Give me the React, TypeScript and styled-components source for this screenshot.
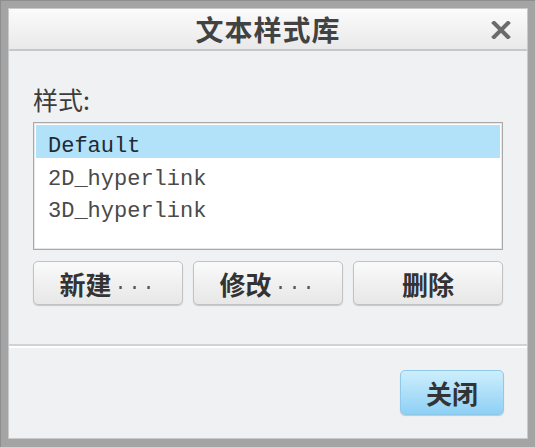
import React, { useState } from 'react';
import styled, { createGlobalStyle } from 'styled-components';

const GlobalStyle = createGlobalStyle`
  html, body {
    margin: 0;
    padding: 0;
    background: #a6a6a6;
  }
  * {
    box-sizing: border-box;
  }
`;

const CJK = `"Noto Sans CJK SC", "Noto Sans", sans-serif`;

const Frame = styled.div`
  width: 535px;
  height: 447px;
  background: #a4a4a4;
  border-top: 1px solid #8e8e8e;
  border-left: 1px solid #8e8e8e;
  padding: 7px 7px 8px 7px;
  display: flex;
  flex-direction: column;
`;

const Window = styled.div`
  flex: 1;
  display: flex;
  flex-direction: column;
  background: #f0f1f3;
  border: 1px solid #c9c9c9;
`;

const TitleBar = styled.div`
  height: 42px;
  flex-shrink: 0;
  position: relative;
  display: flex;
  align-items: center;
  justify-content: center;
  background: linear-gradient(#fbfbfb, #e9e9ea);
  border-bottom: 2px solid #c6c7c9;
`;

const Title = styled.div`
  font-family: ${CJK};
  font-size: 28px;
  font-weight: 700;
  color: #424242;
  letter-spacing: 1px;
`;

const CloseX = styled.button`
  position: absolute;
  right: 16px;
  top: 12px;
  width: 20px;
  height: 18px;
  padding: 0;
  border: none;
  background: transparent;
  cursor: pointer;
`;

const Body = styled.div`
  padding: 33px 24px 39px 24px;
  display: flex;
  flex-direction: column;
  border-bottom: 2px solid #d2d3d5;
`;

const Label = styled.div`
  font-family: ${CJK};
  font-size: 25px;
  line-height: 30px;
  color: #3c3c3c;
  margin-bottom: 8px;
`;

const ListBox = styled.div`
  height: 128px;
  background: #ffffff;
  border: 1px solid #a9a9a9;
  box-shadow: inset 0 0 0 1px #e6e6e6;
  padding: 2px 2px;
`;

const Row = styled.div<{ $selected?: boolean }>`
  height: 32px;
  line-height: 44px;
  padding-left: 12px;
  font-family: "Liberation Mono", "DejaVu Sans Mono", monospace;
  font-size: 22px;
  color: ${({ $selected }) => ($selected ? '#1f2a33' : '#4a4a4a')};
  background: ${({ $selected }) => ($selected ? '#b2e1fa' : 'transparent')};
  cursor: default;
  &:first-child {
    height: 33px;
  }
`;

const ButtonRow = styled.div`
  margin-top: 11px;
  display: grid;
  grid-template-columns: 1fr 1fr 1fr;
  gap: 10px;
`;

const Button = styled.button<{ $primary?: boolean }>`
  height: 44px;
  display: flex;
  align-items: center;
  justify-content: center;
  font-family: ${CJK};
  font-size: 26px;
  font-weight: 700;
  color: #333333;
  border-radius: 5px;
  border: 1px solid ${({ $primary }) => ($primary ? '#8ec9ea' : '#c2c2c2')};
  background: ${({ $primary }) =>
    $primary ? 'linear-gradient(#cdeefd, #8fd0f5)' : 'linear-gradient(#fafafa, #e7e7e8)'};
  box-shadow: 0 1px 1px rgba(0, 0, 0, 0.18);
  padding: 0;
  cursor: pointer;
`;

const Dots = styled.span`
  font-family: "Liberation Mono", monospace;
  font-weight: 400;
  font-size: 20px;
  color: #555;
  letter-spacing: 2px;
  margin-left: 3px;
`;

const Footer = styled.div`
  flex: 1;
  border-top: 2px solid #ffffff;
  padding: 22px 23px 0 0;
  display: flex;
  justify-content: flex-end;
  align-items: flex-start;
`;

const CloseButton = styled(Button)`
  width: 104px;
  height: 45px;
`;

const styles = ['Default', '2D_hyperlink', '3D_hyperlink'];

const App: React.FC = () => {
  const [selected, setSelected] = useState(0);

  return (
    <>
      <GlobalStyle />
      <Frame>
        <Window>
          <TitleBar>
            <Title>文本样式库</Title>
            <CloseX aria-label="close">
              <svg width="20" height="18" viewBox="0 0 20 18">
                <path d="M3 2 L17 16 M17 2 L3 16" stroke="#6b6b6b" strokeWidth="4" strokeLinecap="square" />
              </svg>
            </CloseX>
          </TitleBar>
          <Body>
            <Label>样式:</Label>
            <ListBox>
              {styles.map((s, i) => (
                <Row key={s} $selected={i === selected} onClick={() => setSelected(i)}>
                  {s}
                </Row>
              ))}
            </ListBox>
            <ButtonRow>
              <Button>
                新建<Dots>...</Dots>
              </Button>
              <Button>
                修改<Dots>...</Dots>
              </Button>
              <Button>删除</Button>
            </ButtonRow>
          </Body>
          <Footer>
            <CloseButton $primary>关闭</CloseButton>
          </Footer>
        </Window>
      </Frame>
    </>
  );
};

export default App;
